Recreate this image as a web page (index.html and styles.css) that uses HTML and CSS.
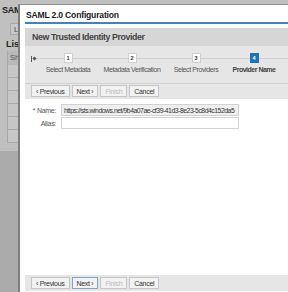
FILE: index.html
```html
<!DOCTYPE html>
<html lang="en">
<head>
    <meta charset="UTF-8">
    <title>SAML 2.0 Configuration</title>
    <link rel="stylesheet" href="styles.css">
</head>
<body>
    <div class="page">
        <div class="page-title">SAML</div>
        <div class="page-btn">Lo</div>
        <div class="page-list">List</div>
        <div class="page-table">
            <div class="page-th">Sho</div>
            <div class="page-row"></div>
            <div class="page-row"></div>
            <div class="page-row"></div>
            <div class="page-row"></div>
            <div class="page-row"></div>
            <div class="page-row"></div>
        </div>
    </div>

    <div class="dialog">
        <div class="dialog-title">SAML 2.0 Configuration</div>
        <div class="wizard">
            <div class="wizard-head">New Trusted Identity Provider</div>
            <div class="steps">
                <span class="steps-start"></span>
                <div class="step">
                    <span class="step-num">1</span>
                    <span class="step-label">Select Metadata</span>
                </div>
                <div class="step">
                    <span class="step-num">2</span>
                    <span class="step-label">Metadata Verification</span>
                </div>
                <div class="step">
                    <span class="step-num">3</span>
                    <span class="step-label">Select Providers</span>
                </div>
                <div class="step active">
                    <span class="step-num">4</span>
                    <span class="step-label">Provider Name</span>
                </div>
            </div>
            <div class="toolbar">
                <button class="btn">&lsaquo; Previous</button>
                <button class="btn">Next &rsaquo;</button>
                <button class="btn" disabled>Finish</button>
                <button class="btn">Cancel</button>
            </div>
            <div class="form">
                <div class="form-row">
                    <label class="form-label">* Name:</label>
                    <input class="form-input readonly" type="text" value="https://sts.windows.net/9b4a07ae-cf39-41d3-8e23-5c8d4c152da5" readonly>
                </div>
                <div class="form-row">
                    <label class="form-label">Alias:</label>
                    <input class="form-input" type="text" value="">
                </div>
            </div>
            <div class="toolbar bottom">
                <button class="btn">&lsaquo; Previous</button>
                <button class="btn focus">Next &rsaquo;</button>
                <button class="btn" disabled>Finish</button>
                <button class="btn">Cancel</button>
            </div>
        </div>
    </div>
</body>
</html>
```

FILE: styles.css
```css
* {
    margin: 0;
    padding: 0;
    box-sizing: border-box;
}

body {
    font-family: "Liberation Sans", Arial, sans-serif;
    font-size: 8px;
    color: #333;
    width: 288px;
    height: 292px;
    overflow: hidden;
    position: relative;
    background: #ababab;
}

/* dimmed page behind the dialog */
.page {
    background: #c0c0c0;
    height: 151px;
    padding: 5px 0 0 2px;
}

.page-title {
    font-weight: bold;
    font-size: 9px;
    letter-spacing: -0.3px;
    color: #222;
}

.page-btn {
    margin: 8px 0 0 8px;
    width: 10px;
    height: 12px;
    border: 1px solid #a8a8a8;
    border-right: 0;
    background: #c8c8c8;
    padding: 1px 0 0 3px;
    font-size: 7.5px;
    color: #444;
}

.page-list {
    font-weight: bold;
    font-size: 9px;
    margin: 4px 0 0 4px;
    color: #222;
}

.page-table {
    margin: 2px 0 0 5px;
    border-left: 1px solid #a8a8a8;
}

.page-th {
    height: 14px;
    background: #b9b9b9;
    padding: 2px 0 0 2px;
    font-size: 7.5px;
    color: #555;
}

.page-row {
    height: 13px;
    border-bottom: 1px solid #aaa;
    background: #c6c6c6;
}

/* dialog, cut off by the right and bottom edges */
.dialog {
    position: absolute;
    left: 18px;
    top: 4px;
    width: 270px;
    height: 288px;
    background: #fff;
    border-left: 2px solid #7e7e7e;
    border-top: 1px solid #8e8e8e;
    padding: 0 0 0 5px;
}

.dialog-title {
    font-weight: bold;
    font-size: 8.6px;
    letter-spacing: -0.2px;
    color: #222;
    height: 19px;
    padding: 5px 0 0 1px;
    border-bottom: 2px solid #3a86c4;
}

.wizard {
    margin-top: 4px;
}

.wizard-head {
    background: #d6d6d6;
    font-weight: bold;
    font-size: 8.8px;
    letter-spacing: -0.4px;
    color: #444;
    height: 18px;
    padding: 4px 0 0 7px;
}

.steps {
    background: #e6e6e6;
    height: 38px;
    display: flex;
    align-items: flex-start;
    padding: 7px 0 0 6px;
    border-bottom: 1px solid #d2d2d2;
    position: relative;
}

.steps::before {
    content: "";
    position: absolute;
    left: 8px;
    right: 0;
    top: 12px;
    border-top: 1px solid #d0d0d0;
}

.steps-start {
    width: 6px;
    height: 6px;
    border-left: 1px solid #555;
    margin-top: 3px;
    position: relative;
}

.steps-start::after {
    content: "";
    position: absolute;
    left: 1px;
    top: 1px;
    width: 3px;
    height: 3px;
    background: #555;
    transform: rotate(45deg);
}

.step {
    display: flex;
    flex-direction: column;
    align-items: center;
    width: 64px;
    color: #555;
    position: relative;
}

.step:first-of-type {
    margin-left: -1px;
}

.step:last-of-type {
    margin-left: -6px;
}

.step-num {
    width: 9px;
    height: 10px;
    background: #fff;
    border: 1px solid #cfcfcf;
    font-size: 5.5px;
    font-weight: bold;
    text-align: center;
    line-height: 8px;
    color: #333;
}

.step-label {
    margin-top: 3px;
    white-space: nowrap;
    font-size: 7px;
    letter-spacing: -0.4px;
}

.step.active .step-num {
    background: #1a72c0;
    border-color: #1a72c0;
    color: #fff;
}

.step.active .step-label {
    font-weight: bold;
    color: #444;
    letter-spacing: -0.5px;
}

.toolbar {
    background: #e6e6e6;
    display: flex;
    gap: 2px;
    padding: 1px 6px;
    height: 15px;
}

.toolbar.bottom {
    margin-top: 146px;
    height: 16px;
    padding-top: 2px;
}

.btn {
    font-family: "Liberation Sans", Arial, sans-serif;
    font-size: 7px;
    letter-spacing: -0.3px;
    height: 12px;
    padding: 0 4px;
    background: #f2f2f2;
    border: 1px solid #c6c6c6;
    color: #333;
}

.btn:disabled {
    color: #bbb;
}

.btn.focus {
    border-color: #7da6d8;
}

.form {
    padding: 5px 0 0 0;
}

.form-row {
    display: flex;
    align-items: center;
    margin-bottom: 1px;
}

.form-label {
    width: 36px;
    text-align: right;
    padding-right: 5px;
    font-size: 7px;
    letter-spacing: -0.3px;
    color: #555;
}

.form-input {
    width: 178px;
    height: 12px;
    border: 1px solid #d2d2d2;
    background: #fff;
    font-family: "Liberation Sans", Arial, sans-serif;
    font-size: 6.8px;
    letter-spacing: -0.45px;
    color: #333;
    padding: 0 2px;
}

.form-input.readonly {
    background: #efefef;
}
```
